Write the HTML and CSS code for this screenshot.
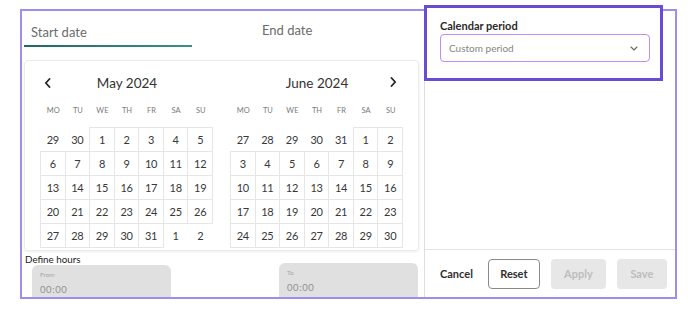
FILE: index.html
```html
<!DOCTYPE html>
<html lang="en">
<head>
<meta charset="utf-8">
<title>Date range picker</title>
<link rel="stylesheet" href="styles.css">
</head>
<body>
<div class="frame">
  <div class="left">
    <div class="tabs">
      <div class="tab active">Start date</div>
      <div class="tab end">End date</div>
    </div>
    <div class="card">
      <div class="month">
        <div class="mhead">
          <span class="nav prev"><svg width="7" height="10" viewBox="0 0 7 10"><path d="M5.5 1 L1.8 5 L5.5 9" fill="none" stroke="#222" stroke-width="1.8" stroke-linecap="round" stroke-linejoin="round"/></svg></span>
          <span class="mtitle">May 2024</span>
          <span></span>
        </div>
        <div class="dow"><span>MO</span><span>TU</span><span>WE</span><span>TH</span><span>FR</span><span>SA</span><span>SU</span></div>
        <div class="days">
          <span class="out">29</span><span class="out">30</span><span class="in">1</span><span class="in">2</span><span class="in">3</span><span class="in">4</span><span class="in">5</span>
          <span class="in">6</span><span class="in">7</span><span class="in">8</span><span class="in">9</span><span class="in">10</span><span class="in">11</span><span class="in">12</span>
          <span class="in">13</span><span class="in">14</span><span class="in">15</span><span class="in">16</span><span class="in">17</span><span class="in">18</span><span class="in">19</span>
          <span class="in">20</span><span class="in">21</span><span class="in">22</span><span class="in">23</span><span class="in">24</span><span class="in">25</span><span class="in">26</span>
          <span class="in">27</span><span class="in">28</span><span class="in">29</span><span class="in">30</span><span class="in">31</span><span class="out">1</span><span class="out">2</span>
        </div>
      </div>
      <div class="month">
        <div class="mhead">
          <span></span>
          <span class="mtitle">June 2024</span>
          <span class="nav next"><svg width="7" height="10" viewBox="0 0 7 10"><path d="M1.5 1 L5.2 5 L1.5 9" fill="none" stroke="#222" stroke-width="1.8" stroke-linecap="round" stroke-linejoin="round"/></svg></span>
        </div>
        <div class="dow"><span>MO</span><span>TU</span><span>WE</span><span>TH</span><span>FR</span><span>SA</span><span>SU</span></div>
        <div class="days">
          <span class="out">27</span><span class="out">28</span><span class="out">29</span><span class="out">30</span><span class="out">31</span><span class="in">1</span><span class="in">2</span>
          <span class="in">3</span><span class="in">4</span><span class="in">5</span><span class="in">6</span><span class="in">7</span><span class="in">8</span><span class="in">9</span>
          <span class="in">10</span><span class="in">11</span><span class="in">12</span><span class="in">13</span><span class="in">14</span><span class="in">15</span><span class="in">16</span>
          <span class="in">17</span><span class="in">18</span><span class="in">19</span><span class="in">20</span><span class="in">21</span><span class="in">22</span><span class="in">23</span>
          <span class="in">24</span><span class="in">25</span><span class="in">26</span><span class="in">27</span><span class="in">28</span><span class="in">29</span><span class="in">30</span>
        </div>
      </div>
    </div>
    <div class="hours-label">Define hours</div>
    <div class="hours">
      <div class="time from"><div class="tlabel">From</div><div class="tval">00:00</div></div>
      <div class="time to"><div class="tlabel">To</div><div class="tval">00:00</div></div>
    </div>
  </div>
  <div class="right">
    <div class="period">
      <div class="plabel">Calendar period</div>
      <div class="select">
        <span>Custom period</span>
        <svg width="8" height="5" viewBox="0 0 8 5"><path d="M1 1 L4 4 L7 1" fill="none" stroke="#666" stroke-width="1.1" stroke-linecap="round" stroke-linejoin="round"/></svg>
      </div>
    </div>
    <div class="spacer"></div>
    <div class="actions">
      <button class="btn cancel">Cancel</button>
      <button class="btn reset">Reset</button>
      <button class="btn disabled apply">Apply</button>
      <button class="btn disabled save">Save</button>
    </div>
  </div>
</div>
</body>
</html>
```

FILE: styles.css
```css
* { box-sizing: border-box; }

html, body {
  margin: 0;
  padding: 0;
  background: #fff;
  font-family: Lato, "Open Sans", "Noto Sans", sans-serif;
  color: #333;
}

.frame {
  margin: 9px 0 0 20px;
  width: 657px;
  height: 290px;
  border: 2px solid #a08cec;
  display: flex;
}

/* ---------- left: date pickers ---------- */
.left {
  width: 402px;
  flex: none;
  overflow: hidden;
  display: flex;
  flex-direction: column;
}

.tabs {
  display: flex;
  padding-left: 2px;
  height: 36px;
  flex: none;
}

.tab {
  font-size: 13px;
  line-height: 18px;
  color: #6b6b6b;
  padding: 12px 0 4px 7px;
}

.tab.active {
  width: 168px;
  border-bottom: 2px solid #2b7b79;
  border-image: linear-gradient(90deg, #1f6966, #3b8f8c) 1;
}

.tab.end {
  margin-left: 63px;
  padding-top: 10px;
}

.card {
  margin: 13px 0 0 2px;
  width: 395px;
  height: 191px;
  flex: none;
  border: 1px solid #ebebeb;
  border-radius: 4px;
  box-shadow: 0 1px 3px rgba(0, 0, 0, 0.08);
  padding: 12px 15px 0 16px;
  display: flex;
  gap: 18px;
}

.month {
  width: 172px;
  flex: none;
}

.mhead {
  display: grid;
  grid-template-columns: 20px 1fr 20px;
  height: 20px;
  align-items: center;
}

.mtitle {
  text-align: center;
  font-size: 13.5px;
  color: #333;
  line-height: 20px;
}

.nav {
  display: flex;
  align-items: center;
}

.nav.prev { justify-self: start; margin-left: 3px; }
.nav.next { justify-self: end; margin-right: 6px; margin-top: -3px; }

.dow {
  display: grid;
  grid-template-columns: repeat(7, 1fr);
  margin-top: 10px;
  line-height: 16px;
  font-size: 7.5px;
  color: #7a7a7a;
  text-align: center;
}

.days {
  display: grid;
  grid-template-columns: repeat(7, 1fr);
  grid-auto-rows: 24px;
  margin-top: 9px;
  font-size: 11px;
  letter-spacing: -0.3px;
  color: #383838;
}

.days span {
  display: flex;
  align-items: center;
  justify-content: center;
  margin: -1px 0 0 -1px;
  border: 1px solid transparent;
}

.days span.in {
  border-color: #e6e6e6;
}

.hours-label {
  margin: 2px 0 0 3px;
  font-size: 9.8px;
  line-height: 12px;
  color: #222;
  flex: none;
}

.hours {
  display: flex;
  justify-content: space-between;
  padding: 0 6px 0 10px;
  flex: none;
}

.time {
  width: 139px;
  height: 42px;
  background: #e0e0e0;
  border-radius: 6px 6px 0 0;
  padding: 5px 8px 0;
}

.time.to { margin-top: -2px; }

.tlabel {
  font-size: 6.5px;
  line-height: 10px;
  color: #a6a6a6;
}

.tval {
  margin-top: 4px;
  font-size: 9.5px;
  line-height: 12px;
  letter-spacing: 0.6px;
  color: #8f8f8f;
}

/* ---------- right: period & actions ---------- */
.right {
  flex: 1;
  border-left: 1px solid #dedede;
  display: flex;
  flex-direction: column;
}

.period {
  position: relative;
  z-index: 1;
  margin: -6px 0 0 -1px;
  width: 239px;
  height: 76px;
  flex: none;
  background: #fff;
  border: 3px solid #6a4bd6;
  padding: 11px 0 0 13px;
}

.plabel {
  font-size: 11px;
  font-weight: 700;
  line-height: 14px;
  color: #2a2a2a;
}

.select {
  margin-top: 1px;
  width: 210px;
  height: 28px;
  border: 1px solid #c28cf0;
  border-radius: 4px;
  display: flex;
  align-items: center;
  justify-content: space-between;
  padding: 0 11px 0 8px;
  font-size: 10px;
  color: #858585;
}

.spacer { flex: 1; }

.actions {
  height: 48px;
  flex: none;
  border-top: 1px solid #e2e2e2;
  display: flex;
  align-items: center;
  gap: 11px;
  padding-left: 15px;
}

.btn {
  font-family: Lato, "Open Sans", sans-serif;
  font-weight: 700;
  font-size: 11px;
  height: 30px;
  border-radius: 4px;
  border: none;
  background: none;
  padding: 0;
  color: #2e2e2e;
}

.btn.cancel { margin-right: 4px; }

.btn.reset {
  width: 52px;
  border: 1px solid #8a8a8a;
  background: #fff;
}

.btn.disabled {
  background: #e7e7e7;
  color: #bdbdbd;
}

.btn.apply { width: 55px; }
.btn.save { width: 50px; }
```
